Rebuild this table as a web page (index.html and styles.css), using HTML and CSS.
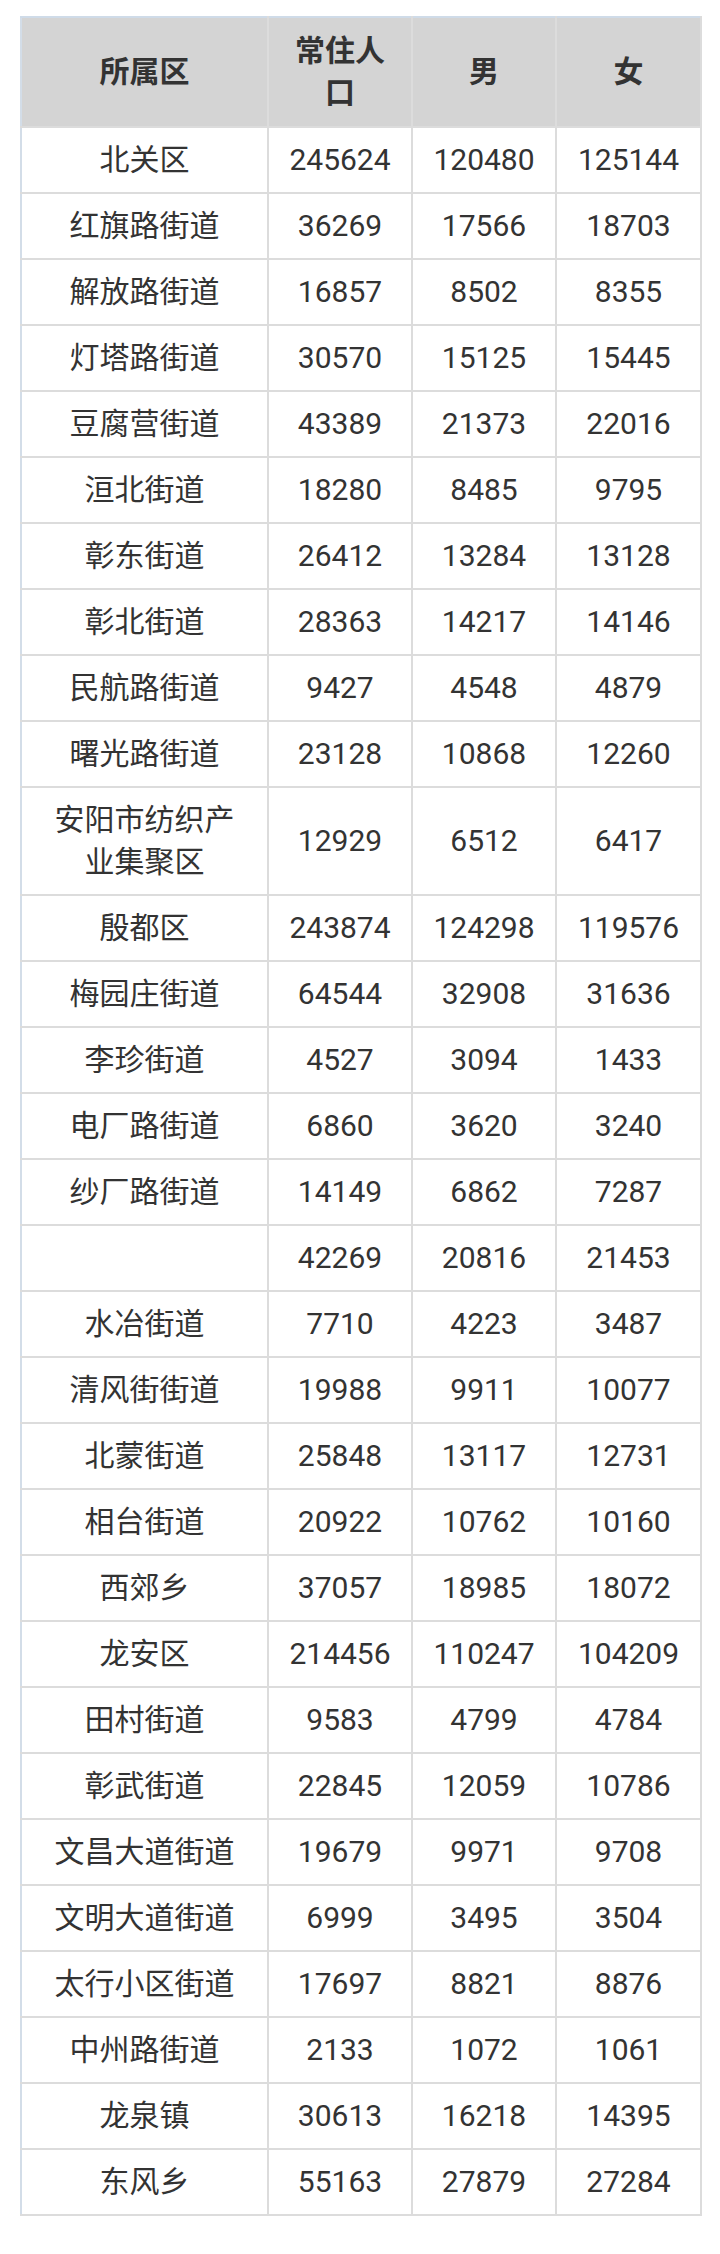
FILE: index.html
```html
<!DOCTYPE html>
<html lang="zh-CN">
<head>
<meta charset="utf-8">
<link rel="stylesheet" href="styles.css">
</head>
<body>
<table class="pop">
<colgroup><col class="c1"><col class="c2"><col class="c3"><col class="c4"></colgroup>
<thead>
<tr><th>所属区</th><th>常住人口</th><th>男</th><th>女</th></tr>
</thead>
<tbody>
<tr><td>北关区</td><td>245624</td><td>120480</td><td>125144</td></tr>
<tr><td>红旗路街道</td><td>36269</td><td>17566</td><td>18703</td></tr>
<tr><td>解放路街道</td><td>16857</td><td>8502</td><td>8355</td></tr>
<tr><td>灯塔路街道</td><td>30570</td><td>15125</td><td>15445</td></tr>
<tr><td>豆腐营街道</td><td>43389</td><td>21373</td><td>22016</td></tr>
<tr><td>洹北街道</td><td>18280</td><td>8485</td><td>9795</td></tr>
<tr><td>彰东街道</td><td>26412</td><td>13284</td><td>13128</td></tr>
<tr><td>彰北街道</td><td>28363</td><td>14217</td><td>14146</td></tr>
<tr><td>民航路街道</td><td>9427</td><td>4548</td><td>4879</td></tr>
<tr><td>曙光路街道</td><td>23128</td><td>10868</td><td>12260</td></tr>
<tr><td>安阳市纺织产业集聚区</td><td>12929</td><td>6512</td><td>6417</td></tr>
<tr><td>殷都区</td><td>243874</td><td>124298</td><td>119576</td></tr>
<tr><td>梅园庄街道</td><td>64544</td><td>32908</td><td>31636</td></tr>
<tr><td>李珍街道</td><td>4527</td><td>3094</td><td>1433</td></tr>
<tr><td>电厂路街道</td><td>6860</td><td>3620</td><td>3240</td></tr>
<tr><td>纱厂路街道</td><td>14149</td><td>6862</td><td>7287</td></tr>
<tr><td>&nbsp;</td><td>42269</td><td>20816</td><td>21453</td></tr>
<tr><td>水冶街道</td><td>7710</td><td>4223</td><td>3487</td></tr>
<tr><td>清风街街道</td><td>19988</td><td>9911</td><td>10077</td></tr>
<tr><td>北蒙街道</td><td>25848</td><td>13117</td><td>12731</td></tr>
<tr><td>相台街道</td><td>20922</td><td>10762</td><td>10160</td></tr>
<tr><td>西郊乡</td><td>37057</td><td>18985</td><td>18072</td></tr>
<tr><td>龙安区</td><td>214456</td><td>110247</td><td>104209</td></tr>
<tr><td>田村街道</td><td>9583</td><td>4799</td><td>4784</td></tr>
<tr><td>彰武街道</td><td>22845</td><td>12059</td><td>10786</td></tr>
<tr><td>文昌大道街道</td><td>19679</td><td>9971</td><td>9708</td></tr>
<tr><td>文明大道街道</td><td>6999</td><td>3495</td><td>3504</td></tr>
<tr><td>太行小区街道</td><td>17697</td><td>8821</td><td>8876</td></tr>
<tr><td>中州路街道</td><td>2133</td><td>1072</td><td>1061</td></tr>
<tr><td>龙泉镇</td><td>30613</td><td>16218</td><td>14395</td></tr>
<tr><td>东风乡</td><td>55163</td><td>27879</td><td>27284</td></tr>
</tbody>
</table>
</body>
</html>
```
FILE: styles.css
```css
html, body {
  margin: 0;
  padding: 0;
  background: #ffffff;
}
body {
  padding: 16px 20px 0 20px;
  font-family: Roboto, "Noto Sans CJK SC", sans-serif;
  color: #333333;
}
.pop {
  width: 680px;
  border-collapse: collapse;
  table-layout: fixed;
  font-size: 30px;
  line-height: 42px;
}
.c1 { width: 247px; }
.c2 { width: 144px; }
.c3 { width: 144px; }
.c4 { width: 145px; }
.pop th,
.pop td {
  border: 2px solid #dcdcdc;
  padding: 11px 20px;
  text-align: center;
  vertical-align: middle;
  overflow: hidden;
}
.pop th {
  background: #d4d4d4;
  font-weight: bold;
  color: #333333;
  padding-top: 12px;
  padding-bottom: 12px;
  border-top-color: #cfdbe8;
}
.pop tr > *:first-child {
  border-left-color: #d3dde8;
}
.pop td {
  font-weight: normal;
}
```
